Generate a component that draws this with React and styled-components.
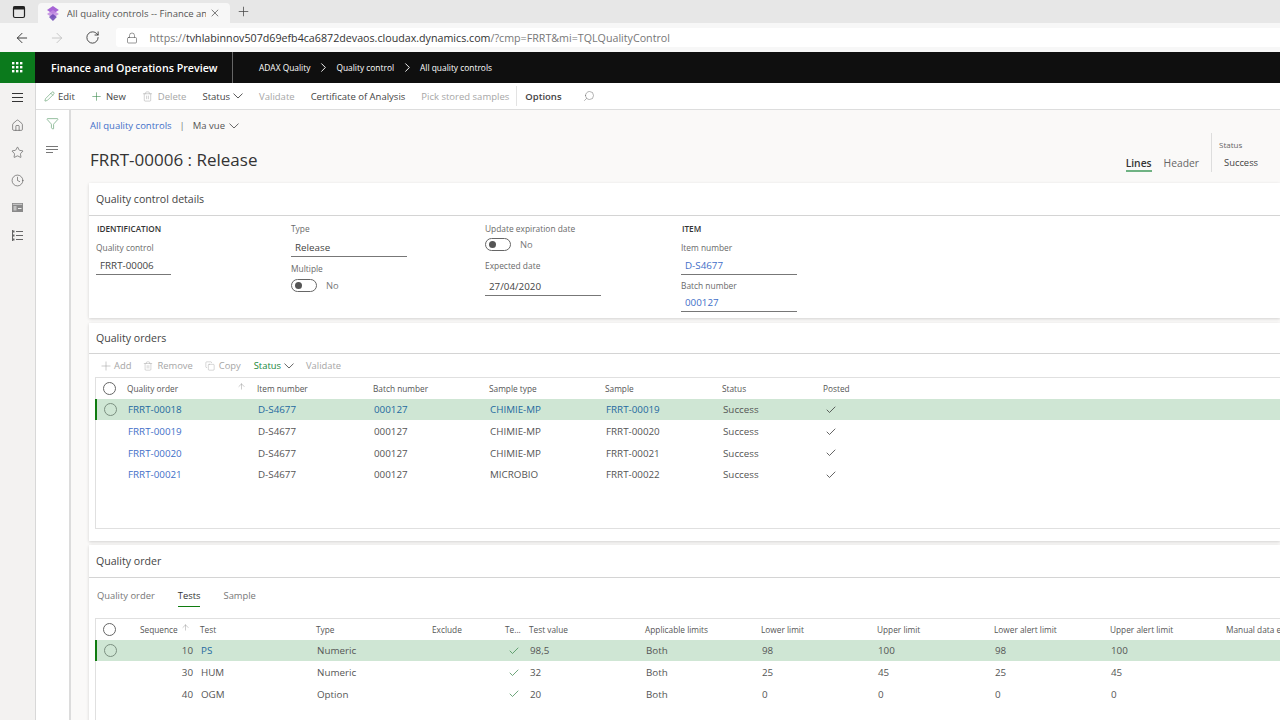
import React from "react";
import styled, { createGlobalStyle } from "styled-components";
import {
  ArrowLeft,
  ArrowRight,
  ArrowUp,
  Check,
  ChevronRight,
  Clock,
  Copy,
  Filter,
  Home,
  Lock,
  Pencil,
  Plus,
  RotateCw,
  Search,
  Star,
  Trash2,
  X,
} from "lucide-react";

const GlobalStyle = createGlobalStyle`
  html, body {
    margin: 0;
    height: 100%;
    overflow: hidden;
    background: #fff;
  }
  body {
    font-family: "Open Sans", "Noto Sans", "Liberation Sans", sans-serif;
    color: #444;
  }
  * {
    box-sizing: border-box;
  }
`;

const Page = styled.div`
  width: 1280px;
  height: 720px;
  display: flex;
  flex-direction: column;
  overflow: hidden;
`;

/* browser chrome */
const TabStrip = styled.div`
  height: 23px;
  flex: none;
  display: flex;
  align-items: flex-end;
  background: #e7e7e7;
  color: #333;
`;

const WindowBtn = styled.div`
  width: 38px;
  height: 23px;
  display: flex;
  align-items: center;
  justify-content: center;
`;

const BrowserTab = styled.div`
  width: 192px;
  height: 20px;
  display: flex;
  align-items: center;
  padding: 0 9px;
  background: #f7f7f7;
  border-radius: 4px 4px 0 0;
  font-size: 9.5px;
  color: #555;
`;

const TabTitle = styled.span`
  margin-left: 8px;
  width: 141px;
  white-space: nowrap;
  overflow: hidden;
`;

const NewTab = styled.div`
  margin-left: 6px;
  width: 16px;
  height: 23px;
  display: flex;
  align-items: center;
  color: #444;
`;

const AddressRow = styled.div`
  height: 29px;
  flex: none;
  display: flex;
  align-items: center;
  background: #f7f7f7;
`;

const NavBtn = styled.div`
  width: 35.5px;
  display: flex;
  justify-content: center;
  color: ${(p) => (p.$off ? "#c4c4c4" : "#333")};
  margin-left: ${(p) => (p.$first ? "4px" : "0")};
`;

const AddressField = styled.div`
  margin-left: 5px;
  flex: 1;
  height: 19px;
  display: flex;
  align-items: center;
  padding-left: 10px;
  background: #fff;
  border-radius: 3px 0 0 3px;
  color: #555;
`;

const Url = styled.span`
  margin-left: 12px;
  font-size: 10.7px;
  color: #777;
  white-space: nowrap;
  b {
    font-weight: 400;
    color: #333;
  }
`;

/* black nav bar */
const NavBar = styled.div`
  height: 31px;
  flex: none;
  display: flex;
  align-items: center;
  background: #0f0f0f;
  color: #fff;
`;

const Waffle = styled.div`
  width: 35px;
  height: 31px;
  display: flex;
  align-items: center;
  justify-content: center;
  background: #0b7a1c;
`;

const AppName = styled.div`
  width: 198px;
  height: 31px;
  display: flex;
  align-items: center;
  padding-left: 16px;
  border-right: 1px solid #666;
  font-size: 10.7px;
  font-weight: 600;
  white-space: nowrap;
`;

const Crumbs = styled.div`
  margin-left: 26px;
  display: flex;
  align-items: center;
  gap: 5.5px;
  font-size: 8.4px;
  white-space: nowrap;
`;

/* action pane */
const Body = styled.div`
  flex: 1;
  min-height: 0;
  display: flex;
`;

const NavRail = styled.nav`
  width: 36px;
  flex: none;
  display: flex;
  flex-direction: column;
  align-items: center;
  gap: 14.6px;
  padding-top: 8px;
  background: #f3f2f1;
  border-right: 1px solid #d8d8d8;
  color: #555;
`;

const Workspace = styled.div`
  flex: 1;
  min-width: 0;
  display: flex;
  flex-direction: column;
`;

const ActionBar = styled.div`
  height: 27px;
  flex: none;
  display: flex;
  align-items: center;
  padding-left: 8px;
  border-bottom: 1px solid #ddd;
  background: #fff;
  font-size: 9.5px;
`;

const Action = styled.span`
  display: inline-flex;
  align-items: center;
  gap: ${(p) => p.$gap ?? 3}px;
  margin-right: ${(p) => p.$right ?? 16}px;
  white-space: nowrap;
  font-weight: ${(p) => (p.$strong ? 600 : 400)};
  color: ${(p) => (p.$off ? "#a6a6a6" : p.$green ? "#17873a" : "#444")};
`;

const Divider = styled.span`
  width: 1px;
  height: 20px;
  background: #e3e3e3;
  margin-right: 8px;
`;

const Split = styled.div`
  flex: 1;
  min-height: 0;
  display: flex;
`;

const FilterRail = styled.div`
  width: 35px;
  flex: none;
  display: flex;
  flex-direction: column;
  align-items: center;
  gap: 16px;
  padding-top: 7px;
  border-right: 2px solid #dcdcdc;
  color: #5c9c6c;
`;

const Content = styled.main`
  flex: 1;
  min-width: 0;
  display: flex;
  flex-direction: column;
  padding-left: 18px;
  background: #faf9f8;
`;

/* page header */
const PageHeader = styled.header`
  height: 73px;
  flex: none;
  display: flex;
  justify-content: space-between;
`;

const HeaderLeft = styled.div`
  padding: 9px 0 0 1px;
`;

const ViewLine = styled.div`
  display: flex;
  align-items: center;
  height: 13px;
  font-size: 9.5px;
  white-space: nowrap;
`;

const Link = styled.span`
  color: #3f6fc8;
`;

const Pipe = styled.span`
  margin: 0 8px;
  color: #777;
`;

const MyView = styled.span`
  display: inline-flex;
  align-items: center;
  gap: 4px;
  color: #555;
`;

const Title = styled.h1`
  margin: 17px 0 0;
  font-size: 17px;
  line-height: 22px;
  font-weight: 400;
  color: #333;
  white-space: nowrap;
`;

const HeaderRight = styled.div`
  display: flex;
  align-items: flex-end;
  padding-bottom: 11px;
`;

const ViewTab = styled.span`
  height: 16px;
  margin-right: ${(p) => p.$right}px;
  font-size: 10.3px;
  line-height: 14px;
  color: ${(p) => (p.$active ? "#333" : "#666")};
  font-weight: ${(p) => (p.$active ? 600 : 400)};
  border-bottom: ${(p) => (p.$active ? "2px solid #6fb283" : "2px solid transparent")};
`;

const StatusBox = styled.div`
  width: 69px;
  height: 39px;
  padding: 5px 0 0 7px;
  border-left: 1px solid #ddd;
`;

const StatusLabel = styled.div`
  font-size: 8px;
  line-height: 13px;
  color: #666;
`;

const StatusValue = styled.div`
  margin: 5px 0 0 5px;
  font-size: 9.4px;
  line-height: 13px;
  color: #444;
`;

/* cards */
const Card = styled.section`
  flex: none;
  height: ${(p) => p.$height}px;
  margin-bottom: ${(p) => p.$bottom || 0}px;
  background: #fff;
  box-shadow: 0 1px 3px rgba(0, 0, 0, 0.16);
`;

const CardTitle = styled.h2`
  margin: 0;
  height: ${(p) => p.$height}px;
  padding: 0 0 0 7px;
  display: flex;
  align-items: center;
  border-bottom: 1px solid #d4d4d4;
  font-size: 10.6px;
  font-weight: 500;
  color: #444;
`;

const FieldColumns = styled.div`
  display: grid;
  grid-template-columns: 195px 194px 196px 195px;
  padding: 6px 0 0 7px;
`;

const FieldColumn = styled.div`
  display: flex;
  flex-direction: column;
  align-items: flex-start;
`;

const GroupTitle = styled.div`
  height: 14px;
  padding-left: 1px;
  font-size: 8.2px;
  line-height: 14px;
  font-weight: 600;
  color: #333;
`;

const Label = styled.div`
  height: 14px;
  margin-top: ${(p) => p.$top || 0}px;
  font-size: 8.4px;
  line-height: 14px;
  color: #6a6a6a;
`;

const Value = styled.div`
  width: ${(p) => p.$width || 116}px;
  height: 20px;
  margin-top: ${(p) => p.$top || 0}px;
  padding-left: 4px;
  border-bottom: 1px solid #777;
  font-size: 9.8px;
  line-height: 21px;
  color: ${(p) => (p.$link ? "#3f6fc8" : "#444")};
`;

const ToggleRow = styled.div`
  display: flex;
  align-items: center;
  gap: 9px;
  height: 17px;
  margin-top: ${(p) => p.$top || 0}px;
  font-size: 9.4px;
  color: #777;
`;

const Toggle = styled.span`
  position: relative;
  width: 26px;
  height: 13px;
  border: 1px solid #666;
  border-radius: 7px;
  &::after {
    content: "";
    position: absolute;
    left: 3px;
    top: 2px;
    width: 7px;
    height: 7px;
    border-radius: 50%;
    background: #555;
  }
`;

/* grids */
const Strip = styled.div`
  height: 23px;
  display: flex;
  align-items: center;
  padding-left: 10px;
  font-size: 9.4px;
`;

const GridBox = styled.div`
  margin-left: 6px;
  height: ${(p) => p.$height}px;
  border: 1px solid #e0e0e0;
  border-right: 0;
`;

const GridRow = styled.div`
  display: grid;
  grid-template-columns: ${(p) => p.$cols};
  height: ${(p) => (p.$head ? "20.5px" : "21.7px")};
  align-items: center;
  white-space: nowrap;
  position: relative;
  color: #555;
  font-size: ${(p) => (p.$head ? "8.3px" : "9.8px")};
  background: ${(p) => (p.$selected ? "#cfe6d4" : "transparent")};
  ${(p) =>
    !p.$head &&
    `border-left: 2px solid ${p.$selected ? "#107c10" : "transparent"};
     margin-left: -1px;
     padding-top: 1px;`}
`;

const Cell = styled.span`
  display: flex;
  align-items: center;
  min-width: 0;
  justify-content: ${(p) => (p.$end ? "flex-end" : "flex-start")};
  padding-right: ${(p) => p.$pr || 0}px;
  padding-left: ${(p) => p.$pl || 0}px;
  color: ${(p) => (p.$link ? (p.$selected ? "#23699f" : "#3f6fc8") : "inherit")};
`;

const SortArrow = styled(ArrowUp)`
  position: absolute;
  left: ${(p) => p.$left}px;
  top: 4px;
  color: #777;
`;

const Radio = styled.span`
  display: block;
  margin-left: 7px;
  width: 13px;
  height: 13px;
  border-radius: 50%;
  border: 1px solid ${(p) => (p.$selected ? "#7b8f80" : "#666")};
`;

const Tabs = styled.div`
  height: 40px;
  display: flex;
  align-items: flex-start;
  padding: 10px 0 0 8px;
  font-size: 9.4px;
  gap: 23px;
  color: #777;
`;

const SubTab = styled.span`
  height: 19px;
  line-height: 16px;
  font-weight: ${(p) => (p.$active ? 500 : 400)};
  color: ${(p) => (p.$active ? "#333" : "#777")};
  border-bottom: ${(p) => (p.$active ? "1px solid #107c10" : "0")};
`;

const ordersCols = "31px 130px 116px 116px 116px 117px 101px 1fr";
const testsCols = "44px 60px 116px 116px 73px 24px 116px 116px 116px 117px 116px 116px 1fr";

const orders = [
  ["FRRT-00018", "CHIMIE-MP", "FRRT-00019"],
  ["FRRT-00019", "CHIMIE-MP", "FRRT-00020"],
  ["FRRT-00020", "CHIMIE-MP", "FRRT-00021"],
  ["FRRT-00021", "MICROBIO", "FRRT-00022"],
];

const tests = [
  ["10", "PS", "Numeric", "98,5", "98", "100"],
  ["30", "HUM", "Numeric", "32", "25", "45"],
  ["40", "OGM", "Option", "20", "0", "0"],
];

const BrowserIcon = () => (
  <svg width="14" height="14" viewBox="0 0 14 14" fill="none">
    <rect x="1.5" y="1.5" width="11" height="11" rx="1.5" stroke="#222" strokeWidth="1.2" />
    <rect x="1.5" y="1.5" width="11" height="3" fill="#222" />
  </svg>
);

const TabLogo = () => (
  <svg width="12" height="15" viewBox="0 0 12 15">
    <path d="M6 0 12 4 6 8 0 4Z" fill="#a765d6" />
    <path d="M6 4 12 8 6 12 0 8Z" fill="#c08ae0" opacity="0.85" />
    <path d="M6 8 10 11 6 15 2 11Z" fill="#6a44b4" opacity="0.85" />
  </svg>
);

const WaffleIcon = () => (
  <svg width="11" height="11" viewBox="0 0 11 11" fill="#fff">
    {[0, 4, 8].map((y) =>
      [0, 4, 8].map((x) => <rect key={`${x}-${y}`} x={x} y={y} width="2.4" height="2.4" />)
    )}
  </svg>
);

const Chevron = ({ color = "currentColor" }) => (
  <svg width="10" height="6" viewBox="0 0 10 6" fill="none" stroke={color} strokeWidth="0.9">
    <path d="M.5.6 5 5 9.5.6" />
  </svg>
);

const Hamburger = () => (
  <svg width="13" height="13" viewBox="0 0 13 13" stroke="#333" strokeWidth="1">
    <path d="M1 2.5h11M1 6.5h11M1 10.5h11" />
  </svg>
);

const Workspaces = () => (
  <svg width="13" height="13" viewBox="0 0 13 13">
    <rect x="1" y="2" width="11" height="9" fill="#8a8a8a" />
    <rect x="1.8" y="2.8" width="9.4" height="1" fill="#d0d0d0" />
    <rect x="2.5" y="5" width="3" height="4.5" fill="#c2c2c2" />
    <rect x="7" y="7" width="3.5" height="1" fill="#eee" />
  </svg>
);

const Modules = () => (
  <svg width="13" height="13" viewBox="0 0 13 13" fill="none" stroke="#666" strokeWidth="1">
    <path d="M1.5 1v11M5 2.5h7M5 6.5h7M5 10.5h7" />
    <path d="M1.5 2.5h2M1.5 6.5h2M1.5 10.5h2" strokeWidth="2" />
  </svg>
);

const FilterLines = () => (
  <svg width="13" height="8" viewBox="0 0 13 8" stroke="#777" strokeWidth="1">
    <path d="M0 .5h12M0 3.5h12M0 6.5h7" />
  </svg>
);

export default function App() {
  return (
    <Page>
      <GlobalStyle />
      <TabStrip>
        <WindowBtn>
          <BrowserIcon />
        </WindowBtn>
        <BrowserTab>
          <TabLogo />
          <TabTitle>All quality controls -- Finance an</TabTitle>
          <X size={12} strokeWidth={1.6} style={{ marginLeft: 3 }} />
        </BrowserTab>
        <NewTab>
          <Plus size={15} strokeWidth={1.2} />
        </NewTab>
      </TabStrip>
      <AddressRow>
        <NavBtn $first>
          <ArrowLeft size={16} strokeWidth={1.4} />
        </NavBtn>
        <NavBtn $off>
          <ArrowRight size={16} strokeWidth={1.4} />
        </NavBtn>
        <NavBtn>
          <RotateCw size={15} strokeWidth={1.4} />
        </NavBtn>
        <AddressField>
          <Lock size={12} strokeWidth={1.2} />
          <Url>
            https://<b>tvhlabinnov507d69efb4ca6872devaos.cloudax.dynamics.com</b>/?cmp=FRRT&amp;mi=TQLQualityControl
          </Url>
        </AddressField>
      </AddressRow>
      <NavBar>
        <Waffle>
          <WaffleIcon />
        </Waffle>
        <AppName>Finance and Operations Preview</AppName>
        <Crumbs>
          ADAX Quality
          <ChevronRight size={15} strokeWidth={1.5} />
          Quality control
          <ChevronRight size={15} strokeWidth={1.5} />
          All quality controls
        </Crumbs>
      </NavBar>
      <Body>
        <NavRail>
          <Hamburger />
          <Home size={13} strokeWidth={1.2} />
          <Star size={13} strokeWidth={1.2} />
          <Clock size={13} strokeWidth={1.2} />
          <Workspaces />
          <Modules />
        </NavRail>
        <Workspace>
          <ActionBar>
            <Action $right={15}>
              <Pencil size={11} strokeWidth={1.1} color="#3b8a4c" />
              Edit
            </Action>
            <Action $right={16}>
              <Plus size={13} strokeWidth={1.1} color="#3b8a4c" />
              New
            </Action>
            <Action $off $gap={5} $right={16}>
              <Trash2 size={11} strokeWidth={1.1} />
              Delete
            </Action>
            <Action>
              Status
              <Chevron />
            </Action>
            <Action $off>Validate</Action>
            <Action>Certificate of Analysis</Action>
            <Action $off $right={7}>Pick stored samples</Action>
            <Divider />
            <Action $strong $right={21}>Options</Action>
            <Search size={12} strokeWidth={1} color="#666" style={{ transform: "scaleX(-1)" }} />
          </ActionBar>
          <Split>
            <FilterRail>
              <Filter size={13} strokeWidth={1.2} />
              <FilterLines />
            </FilterRail>
            <Content>
              <PageHeader>
                <HeaderLeft>
                  <ViewLine>
                    <Link>All quality controls</Link>
                    <Pipe>|</Pipe>
                    <MyView>
                      Ma vue <Chevron />
                    </MyView>
                  </ViewLine>
                  <Title>FRRT-00006 : Release</Title>
                </HeaderLeft>
                <HeaderRight>
                  <ViewTab $active $right={12}>Lines</ViewTab>
                  <ViewTab $right={12}>Header</ViewTab>
                  <StatusBox>
                    <StatusLabel>Status</StatusLabel>
                    <StatusValue>Success</StatusValue>
                  </StatusBox>
                </HeaderRight>
              </PageHeader>

              <Card $height={135} $bottom={5}>
                <CardTitle $height={33}>Quality control details</CardTitle>
                <FieldColumns>
                  <FieldColumn>
                    <GroupTitle>IDENTIFICATION</GroupTitle>
                    <Label $top={5}>Quality control</Label>
                    <Value $width={75}>FRRT-00006</Value>
                  </FieldColumn>
                  <FieldColumn>
                    <Label>Type</Label>
                    <Value $top={1}>Release</Value>
                    <Label $top={5}>Multiple</Label>
                    <ToggleRow $top={1}>
                      <Toggle />
                      No
                    </ToggleRow>
                  </FieldColumn>
                  <FieldColumn>
                    <Label>Update expiration date</Label>
                    <ToggleRow>
                      <Toggle />
                      No
                    </ToggleRow>
                    <Label $top={6}>Expected date</Label>
                    <Value $top={3}>27/04/2020</Value>
                  </FieldColumn>
                  <FieldColumn>
                    <GroupTitle>ITEM</GroupTitle>
                    <Label $top={5}>Item number</Label>
                    <Value $link>D-S4677</Value>
                    <Label $top={4}>Batch number</Label>
                    <Value $link $top={-1}>000127</Value>
                  </FieldColumn>
                </FieldColumns>
              </Card>

              <Card $height={218} $bottom={4}>
                <CardTitle $height={31}>Quality orders</CardTitle>
                <Strip>
                  <Action $off $gap={1} $right={12}>
                    <Plus size={14} strokeWidth={1} />
                    Add
                  </Action>
                  <Action $off $gap={4} $right={12}>
                    <Trash2 size={10} strokeWidth={1.1} />
                    Remove
                  </Action>
                  <Action $off $gap={4} $right={13}>
                    <Copy size={10} strokeWidth={1.1} />
                    Copy
                  </Action>
                  <Action $green $right={12}>
                    Status
                    <Chevron color="#555" />
                  </Action>
                  <Action $off>Validate</Action>
                </Strip>
                <GridBox $height={152}>
                  <GridRow $head $cols={ordersCols}>
                    <Cell><Radio /></Cell>
                    <Cell>Quality order</Cell>
                    <Cell>Item number</Cell>
                    <Cell>Batch number</Cell>
                    <Cell>Sample type</Cell>
                    <Cell>Sample</Cell>
                    <Cell>Status</Cell>
                    <Cell>Posted</Cell>
                    <SortArrow $left={141} size={9} strokeWidth={1} />
                  </GridRow>
                  {orders.map(([order, type, sample], i) => (
                    <GridRow key={order} $cols={ordersCols} $selected={i === 0}>
                      <Cell>{i === 0 && <Radio $selected />}</Cell>
                      <Cell $link $selected={i === 0}>{order}</Cell>
                      <Cell $link={i === 0} $selected={i === 0}>D-S4677</Cell>
                      <Cell $link={i === 0} $selected={i === 0}>000127</Cell>
                      <Cell $link={i === 0} $selected={i === 0}>{type}</Cell>
                      <Cell $link={i === 0} $selected={i === 0}>{sample}</Cell>
                      <Cell>Success</Cell>
                      <Cell $pl={1}><Check size={12} strokeWidth={1.5} color="#333" /></Cell>
                    </GridRow>
                  ))}
                </GridBox>
              </Card>

              <Card $height={200}>
                <CardTitle $height={33}>Quality order</CardTitle>
                <Tabs>
                  <SubTab>Quality order</SubTab>
                  <SubTab $active>Tests</SubTab>
                  <SubTab>Sample</SubTab>
                </Tabs>
                <GridBox $height={140}>
                  <GridRow $head $cols={testsCols}>
                    <Cell><Radio /></Cell>
                    <Cell>Sequence</Cell>
                    <Cell>Test</Cell>
                    <Cell>Type</Cell>
                    <Cell>Exclude</Cell>
                    <Cell>Te...</Cell>
                    <Cell>Test value</Cell>
                    <Cell>Applicable limits</Cell>
                    <Cell>Lower limit</Cell>
                    <Cell>Upper limit</Cell>
                    <Cell>Lower alert limit</Cell>
                    <Cell>Upper alert limit</Cell>
                    <Cell>Manual data entry</Cell>
                    <SortArrow $left={85} size={9} strokeWidth={1} />
                  </GridRow>
                  {tests.map(([seq, test, type, value, low, up], i) => (
                    <GridRow key={seq} $cols={testsCols} $selected={i === 0}>
                      <Cell>{i === 0 && <Radio $selected />}</Cell>
                      <Cell $end $pr={8}>{seq}</Cell>
                      <Cell $link={i === 0} $selected={i === 0}>{test}</Cell>
                      <Cell>{type}</Cell>
                      <Cell />
                      <Cell $pl={2}><Check size={12} strokeWidth={1.5} color="#3f8a50" /></Cell>
                      <Cell>{value}</Cell>
                      <Cell>Both</Cell>
                      <Cell>{low}</Cell>
                      <Cell>{up}</Cell>
                      <Cell>{low}</Cell>
                      <Cell>{up}</Cell>
                      <Cell />
                    </GridRow>
                  ))}
                </GridBox>
              </Card>
            </Content>
          </Split>
        </Workspace>
      </Body>
    </Page>
  );
}
